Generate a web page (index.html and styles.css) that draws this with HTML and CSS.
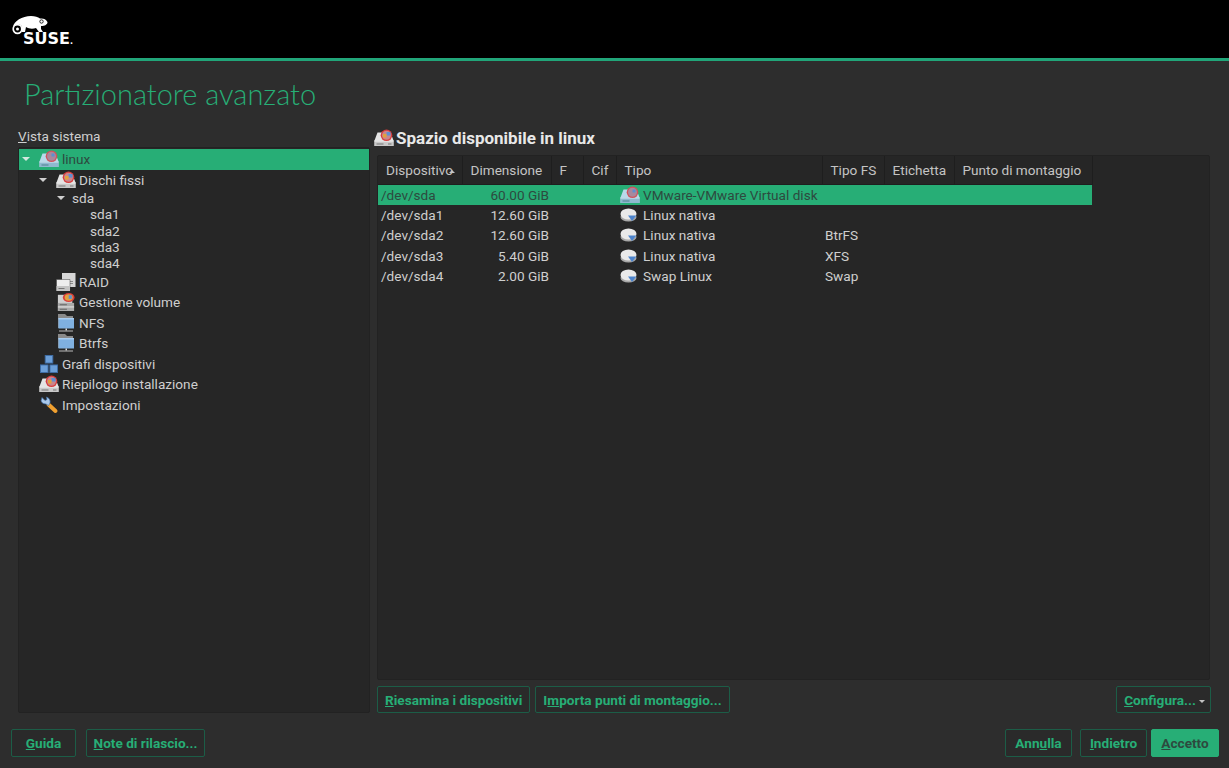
FILE: index.html
```html
<!DOCTYPE html>
<html lang="it">
<head>
    <meta charset="UTF-8">
    <title>Partizionatore avanzato</title>
    <link rel="stylesheet" href="styles.css">
</head>
<body>
    <svg class="icon-defs" width="0" height="0">
        <defs>
            <symbol id="i-hdd" viewBox="0 0 20 17">
                <path d="M3.500 3h13l3 8v5.500H.5V11z" fill="#e4e4e4"/>
                <path d="M.5 11h19v5.500H.5z" fill="#c9c9c9"/>
                <path d="M.5 11h19v1H.5z" fill="#f4f4f4"/>
                <path d="M2.500 14h7v1h-7zM14 14h3.500v1H14z" fill="#777"/>
                <circle cx="12.500" cy="5.800" r="5.800" fill="#d83c3c"/>
                <circle cx="12.500" cy="5.800" r="4.500" fill="#c9848c"/>
                <path d="M12.500 2.500h4v3.500h-4z" fill="#5d8fd0"/>
                <path d="M9 4.500h3.500v3.500H9z" fill="#e2a13c"/>
            </symbol>
            <symbol id="i-hdd-sel" viewBox="0 0 20 17">
                <path d="M3.500 3h13l3 8v5.500H.5V11z" fill="#b9d9ea"/>
                <path d="M.5 11h19v5.500H.5z" fill="#8fb9cf"/>
                <path d="M.5 11h19v1H.5z" fill="#d2e8f2"/>
                <path d="M2.500 14h7v1h-7z" fill="#4f7f8f"/>
                <circle cx="12.500" cy="5.800" r="5.800" fill="#d0525c"/>
                <circle cx="12.500" cy="5.800" r="4.500" fill="#a9889c"/>
                <path d="M12.500 3h3v3h-3z" fill="#5d8fd0"/>
            </symbol>
            <symbol id="i-raid" viewBox="0 0 20 18">
                <path d="M6 0h13.500v14H6z" fill="#d6d6d6"/>
                <path d="M9 8h8v1H9zM9 10h8v1H9z" fill="#8a8a8a"/>
                <path d="M.5 6.500h13.500V18H.5z" fill="#eeeeee" stroke="#444" stroke-width=".5"/>
                <path d="M.5 13h13.500v5H.5z" fill="#c4c4c4"/>
                <path d="M2.500 15h6v1h-6z" fill="#777"/>
            </symbol>
            <symbol id="i-lvm" viewBox="0 0 20 20">
                <path d="M1 2h16v18H1z" fill="#cfcfcf"/>
                <path d="M1 11h18v9H1z" fill="#a9a9a9"/>
                <path d="M1 15h18v1H1z" fill="#eee"/>
                <path d="M3 12.500h8v1H3zM3 17.500h8v1H3z" fill="#666"/>
                <ellipse cx="13" cy="5" rx="6.500" ry="5" fill="#d83c3c"/>
                <ellipse cx="13" cy="5" rx="4.500" ry="3.500" fill="#e2a13c"/>
                <path d="M13 2.500h3.500v4H13z" fill="#5d8fd0"/>
            </symbol>
            <symbol id="i-folder" viewBox="0 0 18 18">
                <path d="M1 0h7l2 2h6v12H1z" fill="#8a8a8a"/>
                <path d="M1.500 4h15.500v10.500H1.500z" fill="#7fb0e0"/>
                <path d="M1.500 4h15.500v1.500H1.500z" fill="#a9cdf0"/>
                <path d="M8.500 14.500h1.500v2H8.500z" fill="#ddd"/>
                <path d="M2 16.500h14V17.500H2z" fill="#bbb"/>
            </symbol>
            <symbol id="i-graph" viewBox="0 0 19 19">
                <rect x="5.500" y="0.500" width="8" height="8" fill="#6c9fd8" stroke="#3e6da6"/>
                <rect x="0.500" y="10.500" width="8" height="8" fill="#6c9fd8" stroke="#3e6da6"/>
                <rect x="10.500" y="10.500" width="8" height="8" fill="#6c9fd8" stroke="#3e6da6"/>
            </symbol>
            <symbol id="i-wrench" viewBox="0 0 18 18">
                <path d="M8.500 8.500l7 6.500" fill="none" stroke="#f0a030" stroke-width="4" stroke-linecap="round"/>
                <path d="M2 1.500L5 4.500 7 3.500 6.500 1A5 5 0 0 1 10 7L8.500 9.500 6 8A5 5 0 0 1 1 5z" fill="#a9c8ea" stroke="#3e6da6" stroke-width="0.700"/>
            </symbol>
            <symbol id="i-part" viewBox="0 0 18 14">
                <ellipse cx="8.500" cy="9" rx="8" ry="4.500" fill="#a8a8a8"/>
                <ellipse cx="8.500" cy="6" rx="8" ry="5.500" fill="#e9e9e9"/>
                <path d="M8 7.500h8.500L12 13z" fill="#4d84cc"/>
            </symbol>
        </defs>
    </svg>

    <header class="top-bar">
        <div class="logo">
            <svg class="logo-mark" viewBox="0 0 36 20" width="36" height="20">
                <path d="M1 12C2 6 10 1 19 1c4 0 7 1 9 2.500 3-.5 6 .5 7.500 3.500 0 2.500-2.500 4-6.500 4v3l2 3h-4l-3-4c-3 1-7 1-10-1l-1 5h-3l-.5-6C8 9 4 8 1 12z" fill="#fff"/>
                <circle cx="5.500" cy="14" r="4.300" fill="#000" stroke="#fff" stroke-width="1.700"/>
                <circle cx="5.500" cy="14" r="1.500" fill="#fff"/>
                <circle cx="29.500" cy="6.500" r="1.700" fill="#fff" stroke="#000" stroke-width=".8"/>
            </svg>
            <span class="logo-text">SUSE<i>.</i></span>
        </div>
    </header>

    <main class="content">
        <h1>Partizionatore avanzato</h1>
        <div class="columns">
            <section class="left-col">
                <div class="tree-label"><u>V</u>ista sistema</div>
                <div class="tree">
                    <div class="tree-row level0 selected"><span class="arrow"></span><svg class="ico"><use href="#i-hdd-sel"/></svg><span>linux</span></div>
                    <div class="tree-row level1"><span class="arrow"></span><svg class="ico"><use href="#i-hdd"/></svg><span>Dischi fissi</span></div>
                    <div class="tree-row level2 small"><span class="arrow"></span><span>sda</span></div>
                    <div class="tree-row level3 small"><span>sda1</span></div>
                    <div class="tree-row level3 small"><span>sda2</span></div>
                    <div class="tree-row level3 small"><span>sda3</span></div>
                    <div class="tree-row level3 small"><span>sda4</span></div>
                    <div class="tree-row level1 no-arrow"><svg class="ico"><use href="#i-raid"/></svg><span>RAID</span></div>
                    <div class="tree-row level1 no-arrow"><svg class="ico"><use href="#i-lvm"/></svg><span>Gestione volume</span></div>
                    <div class="tree-row level1 no-arrow"><svg class="ico"><use href="#i-folder"/></svg><span>NFS</span></div>
                    <div class="tree-row level1 no-arrow"><svg class="ico"><use href="#i-folder"/></svg><span>Btrfs</span></div>
                    <div class="tree-row level0 no-arrow"><svg class="ico"><use href="#i-graph"/></svg><span>Grafi dispositivi</span></div>
                    <div class="tree-row level0 no-arrow"><svg class="ico"><use href="#i-hdd"/></svg><span>Riepilogo installazione</span></div>
                    <div class="tree-row level0 no-arrow"><svg class="ico"><use href="#i-wrench"/></svg><span>Impostazioni</span></div>
                </div>
            </section>

            <section class="right-col">
                <h2><svg class="ico"><use href="#i-hdd"/></svg>Spazio disponibile in linux</h2>
                <div class="table-panel">
                    <table class="devices">
                        <colgroup>
                            <col class="c-dev"><col class="c-size"><col class="c-f"><col class="c-enc">
                            <col class="c-type"><col class="c-fs"><col class="c-label"><col class="c-mount">
                        </colgroup>
                        <thead>
                            <tr>
                                <th class="sorted">Dispositivo</th><th>Dimensione</th><th>F</th><th>Cif</th>
                                <th>Tipo</th><th>Tipo FS</th><th>Etichetta</th><th>Punto di montaggio</th>
                            </tr>
                        </thead>
                        <tbody>
                            <tr class="selected"><td>/dev/sda</td><td class="num">60.00 GiB</td><td></td><td></td><td class="type"><svg class="ico"><use href="#i-hdd-sel"/></svg>VMware-VMware Virtual disk</td><td></td><td></td><td></td></tr>
                            <tr><td>/dev/sda1</td><td class="num">12.60 GiB</td><td></td><td></td><td class="type"><svg class="ico disc"><use href="#i-part"/></svg>Linux nativa</td><td></td><td></td><td></td></tr>
                            <tr><td>/dev/sda2</td><td class="num">12.60 GiB</td><td></td><td></td><td class="type"><svg class="ico disc"><use href="#i-part"/></svg>Linux nativa</td><td>BtrFS</td><td></td><td></td></tr>
                            <tr><td>/dev/sda3</td><td class="num">5.40 GiB</td><td></td><td></td><td class="type"><svg class="ico disc"><use href="#i-part"/></svg>Linux nativa</td><td>XFS</td><td></td><td></td></tr>
                            <tr><td>/dev/sda4</td><td class="num">2.00 GiB</td><td></td><td></td><td class="type"><svg class="ico disc"><use href="#i-part"/></svg>Swap Linux</td><td>Swap</td><td></td><td></td></tr>
                        </tbody>
                    </table>
                </div>
                <div class="table-actions">
                    <button class="btn"><u>R</u>iesamina i dispositivi</button>
                    <button class="btn">I<u>m</u>porta punti di montaggio...</button>
                    <button class="btn btn-menu"><u>C</u>onfigura...<span class="caret"></span></button>
                </div>
            </section>
        </div>
    </main>

    <footer class="bottom-bar">
        <button class="btn btn-help"><u>G</u>uida</button>
        <button class="btn btn-notes"><u>N</u>ote di rilascio...</button>
        <button class="btn btn-fixed push-right">Ann<u>u</u>lla</button>
        <button class="btn btn-fixed"><u>I</u>ndietro</button>
        <button class="btn btn-fixed btn-primary"><u>A</u>ccetto</button>
    </footer>
</body>
</html>
```

FILE: styles.css
```css
* {
    box-sizing: border-box;
}
html, body {
    height: 100%;
}
body {
    margin: 0;
    height: 768px;
    overflow: hidden;
    display: flex;
    flex-direction: column;
    background: #2d2d2d;
    color: #cfcfcf;
    font-family: Roboto, "Liberation Sans", sans-serif;
    font-size: 13.6px;
}
.icon-defs {
    position: absolute;
}
.top-bar {
    height: 61px;
    flex: none;
    background: #000;
    border-bottom: 3px solid #21a579;
    padding: 15px 0 0 12px;
}
.logo {
    position: relative;
    height: 32px;
}
.logo-mark {
    display: block;
}
.logo-text {
    position: absolute;
    left: 11px;
    top: 15px;
    font-family: "DejaVu Sans", sans-serif;
    font-weight: 700;
    font-size: 16px;
    line-height: 18px;
    color: #fff;
}
.logo-text i {
    font-style: normal;
    font-size: 8px;
}
.content {
    flex: 1;
    display: flex;
    flex-direction: column;
    padding: 0 19px 0 18px;
    min-height: 0;
}
h1 {
    margin: 15px 0 0 6px;
    height: 36px;
    font-family: Lato, sans-serif;
    font-weight: 300;
    font-size: 29px;
    line-height: 36px;
    color: #27ae76;
}
.columns {
    display: flex;
    gap: 4px;
    margin-top: 15px;
}
.left-col {
    width: 352px;
}
.tree-label {
    height: 20px;
    line-height: 18px;
}
.tree {
    height: 566px;
    background: #262626;
    border: 1px solid #222;
    border-radius: 2px;
    padding-top: 1px;
}
.tree-row {
    height: 20.5px;
    display: flex;
    align-items: center;
    white-space: nowrap;
}
.tree-row.small {
    height: 16.3px;
}
.tree-row.selected {
    background: #27ae76;
    color: #2d4a3f;
}
.level0 {
    padding-left: 3px;
}
.level1 {
    padding-left: 20px;
}
.level2 {
    padding-left: 38px;
}
.level3 {
    padding-left: 71px;
}
.no-arrow.level0 {
    padding-left: 20px;
}
.no-arrow.level1 {
    padding-left: 37px;
}
.arrow {
    width: 0;
    height: 0;
    margin-right: 9px;
    border-left: 4px solid transparent;
    border-right: 4px solid transparent;
    border-top: 4px solid #cfcfcf;
}
.selected .arrow {
    border-top-color: #d4e8df;
}
.level2 .arrow {
    margin-right: 7px;
}
.ico {
    width: 20px;
    height: 18px;
    margin-right: 3px;
    flex: none;
}
.ico.disc {
    width: 18px;
    height: 14px;
}
.right-col {
    flex: 1;
    min-width: 0;
}
h2 {
    margin: 0;
    height: 22px;
    display: flex;
    align-items: center;
    font-size: 17px;
    font-weight: 700;
    color: #e8e8e8;
}
h2 .ico {
    margin-right: 2px;
}
.table-panel {
    margin: 6px 0 0 3px;
    height: 525px;
    background: #262626;
    border: 1px solid #222;
    border-radius: 2px;
}
.devices {
    width: 714px;
    table-layout: fixed;
    border-collapse: collapse;
}
.c-dev { width: 84px; }
.c-size { width: 89px; }
.c-f { width: 32px; }
.c-enc { width: 33px; }
.c-type { width: 206px; }
.c-fs { width: 62px; }
.c-label { width: 70px; }
.c-mount { width: 138px; }
th {
    height: 28px;
    padding: 0 0 0 8px;
    font-weight: 400;
    text-align: left;
    color: #c4c4c4;
    white-space: nowrap;
    border-right: 1px solid #1e1e1e;
    border-bottom: 1px solid #1e1e1e;
}
th.sorted {
    position: relative;
}
th.sorted::after {
    content: "";
    position: absolute;
    left: 71px;
    top: 14px;
    border-left: 3px solid transparent;
    border-right: 3px solid transparent;
    border-bottom: 3px solid #c4c4c4;
}
td {
    height: 20.5px;
    padding: 0 0 0 3px;
    white-space: nowrap;
    color: #cfcfcf;
}
td.num {
    text-align: right;
    padding-right: 2px;
}
td.type {
    padding-left: 4px;
}
td.type .ico {
    vertical-align: -4px;
    margin-right: 3px;
}
td.type .ico.disc {
    vertical-align: -2px;
    margin-right: 5px;
}
tr.selected td {
    background: #27ae76;
    color: #2d4a3f;
}
.table-actions {
    display: flex;
    gap: 5px;
    margin: 6px -1px 0 3px;
}
.btn {
    height: 27px;
    padding: 0 7px;
    background: #2a2a2a;
    border: 1px solid #1c5d47;
    border-radius: 2px;
    color: #27ae76;
    font-family: Roboto, sans-serif;
    font-size: 13.6px;
    font-weight: 700;
    white-space: nowrap;
}
.btn-menu {
    width: 95px;
    margin-left: auto;
    padding: 0 4px 0 6px;
}
.caret {
    display: inline-block;
    margin-left: 3px;
    vertical-align: 2px;
    border-left: 3px solid transparent;
    border-right: 3px solid transparent;
    border-top: 3px solid #c4c4c4;
}
.bottom-bar {
    display: flex;
    gap: 6px;
    height: 39px;
    flex: none;
    padding: 0 10px 0 11px;
    margin-bottom: 11px;
    align-items: flex-end;
}
.bottom-bar .btn {
    height: 28px;
}
.btn-help {
    width: 65px;
    margin-right: 4px;
}
.btn-notes {
    width: 119px;
    padding: 0;
}
.btn-fixed {
    width: 67px;
}
.push-right {
    margin-left: auto;
    margin-right: 2px;
}
.btn-primary {
    background: #27ae76;
    border-color: #27ae76;
    color: #2d4a3f;
    width: 68px;
    margin-left: -2px;
}
```
